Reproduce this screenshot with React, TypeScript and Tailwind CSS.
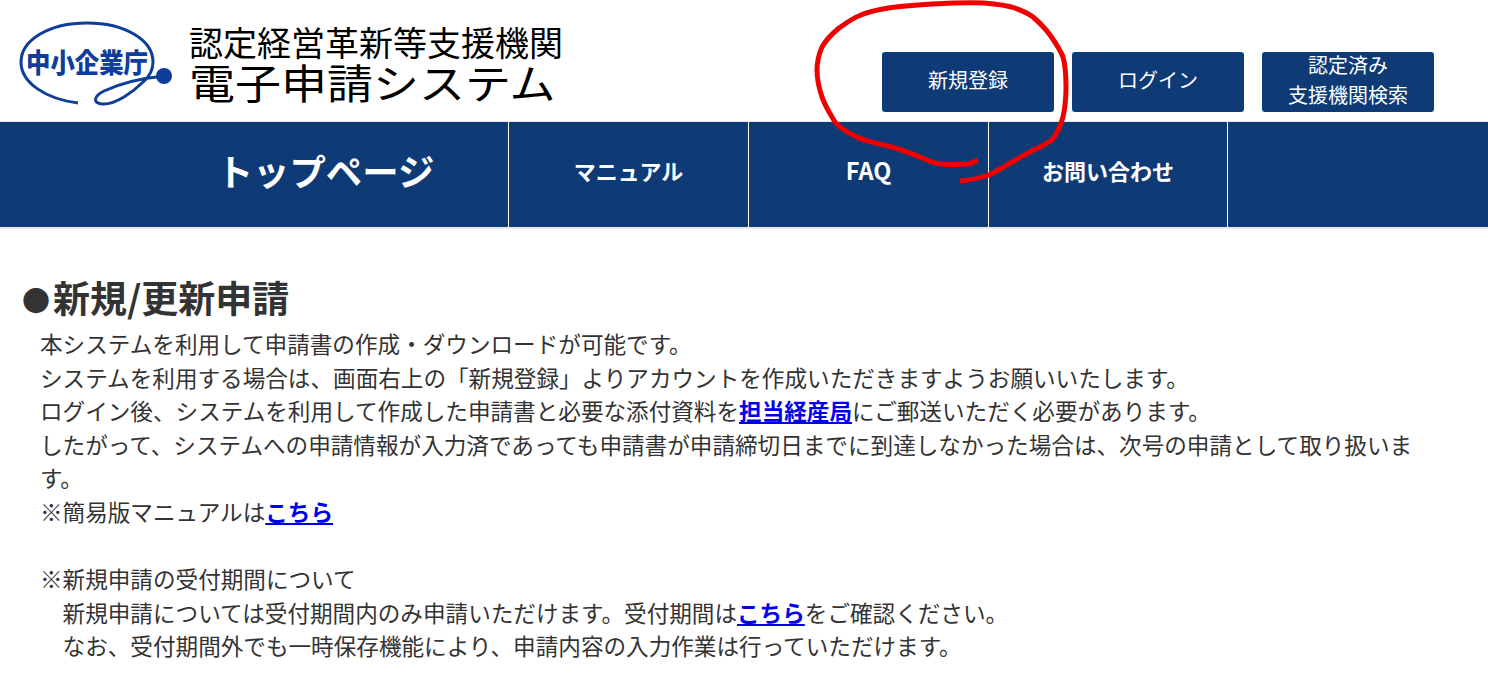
import type { ReactNode } from "react";

const font = { fontFamily: '"Noto Sans CJK JP", sans-serif' };

// red hand drawn circle over the header
const scribble = "M978 160 C972 163 968 165 962 164 C950 165 940 165 932 162 C918 156 905 151 892 147 C878 143 866 142 857 137 C846 132 840 128 835 122 C829 112 825 106 822 97 C819 88 817 80 817 70 C817 60 819 54 822 47 C827 38 833 33 839 28 C846 23 853 18 861 15 C870 11 878 10 888 8 C902 6 917 5 932 4 C950 3 968 2 984 3 C996 4 1006 5 1015 8 C1022 11 1028 13 1033 17 C1040 23 1045 28 1050 35 C1055 42 1060 49 1063 57 C1066 67 1066 77 1066 87 C1066 98 1065 108 1063 117 C1060 127 1057 134 1052 140 C1042 147 1030 151 1019 158 C1009 164 999 170 989 175 C980 178 970 180 960 181";

const Logo = () => (
  <svg width="170" height="90" viewBox="0 0 170 90" className="shrink-0">
    <path
      d="M62 82 C30 78 5 62 5 41 C5 19 33 2 71 2 C109 2 137 19 137 41 C137 50 133 56 127 61 C118 70 100 84 86 83 C76 82 78 75 88 70 C105 62 128 57 148 55"
      fill="none"
      stroke="#0f3d9a"
      strokeWidth="3"
    />
    <circle cx="148" cy="55" r="8" fill="#0f3d9a" />
    <text
      x="10"
      y="52"
      fontSize="27"
      fontWeight="900"
      fill="#0f3d9a"
      textLength="122"
      lengthAdjust="spacingAndGlyphs"
      style={font}
    >
      中小企業庁
    </text>
  </svg>
);

const HeaderButton = ({ children }: { children: ReactNode }) => (
  <a className="block h-[60px] w-[172px] rounded-[2px] bg-[#20d0d0]">
    <span className="flex h-full items-center justify-center rounded-[4px] bg-[#0e3a76] pb-[4px] text-center text-[20px] leading-[30px] text-white">
      <span>{children}</span>
    </span>
  </a>
);

const App = () => {
  return (
    <div className="relative min-h-screen overflow-hidden bg-white text-[#333]" style={font}>
      <header className="flex h-[122px] border-b border-[#e5e8ea]">
        <div className="flex items-start pl-[16px] pt-[21px]">
          <Logo />
          <div className="ml-[3px] flex flex-col text-black">
            <div className="mt-[2px] text-[34px] leading-[38px]">認定経営革新等支援機関</div>
            <div className="origin-top scale-y-[0.88] text-[46px] leading-[46px]">電子申請システム</div>
          </div>
        </div>
        <div className="ml-auto mr-[54px] mt-[52px] flex gap-[18px]">
          <HeaderButton>新規登録</HeaderButton>
          <HeaderButton>ログイン</HeaderButton>
          <HeaderButton>
            認定済み
            <br />
            支援機関検索
          </HeaderButton>
        </div>
      </header>

      <nav className="flex h-[107px] border-b-2 border-[#e5e8ea] bg-[#0e3a76] font-bold text-white">
        <div className="flex w-[509px] items-center justify-center border-r border-white pb-[8px] pl-[143px] text-[36.4px]">
          トップページ
        </div>
        <div className="flex w-[240px] items-center justify-center border-r border-white pb-[8px] text-[22px]">マニュアル</div>
        <div className="flex w-[240px] items-center justify-center border-r border-white pb-[8px] text-[23.5px]">FAQ</div>
        <div className="flex w-[239px] items-center justify-center border-r border-white pb-[8px] text-[22px]">お問い合わせ</div>
      </nav>

      <main className="pl-[22px] pt-[41px]">
        <h2 className="flex h-[57px] items-start text-[37px] font-bold leading-[54px]">
          <span className="mt-[3px] w-[31px] text-[28px]">●</span>
          新規/更新申請
        </h2>
        <div className="ml-[18px] w-[1380px] text-[22.6px] leading-[33.6px]">
          本システムを利用して申請書の作成・ダウンロードが可能です。
          <br />
          システムを利用する場合は、画面右上の「新規登録」よりアカウントを作成いただきますようお願いいたします。
          <br />
          ログイン後、システムを利用して作成した申請書と必要な添付資料を
          <a className="font-bold text-[#0000ee] underline">担当経産局</a>
          にご郵送いただく必要があります。
          <br />
          したがって、システムへの申請情報が入力済であっても申請書が申請締切日までに到達しなかった場合は、次号の申請として取り扱います。
          <br />
          ※簡易版マニュアルは<a className="font-bold text-[#0000ee] underline">こちら</a>
          <br />
          <br />
          ※新規申請の受付期間について
          <br />
          {"　"}新規申請については受付期間内のみ申請いただけます。受付期間は
          <a className="font-bold text-[#0000ee] underline">こちら</a>
          をご確認ください。
          <br />
          {"　"}なお、受付期間外でも一時保存機能により、申請内容の入力作業は行っていただけます。
        </div>
      </main>

      <svg className="pointer-events-none absolute left-0 top-0" width="1488" height="200" viewBox="0 0 1488 200">
        <path d={scribble} fill="none" stroke="#f00000" strokeWidth="5" strokeLinecap="butt" />
      </svg>
    </div>
  );
};

export default App;
